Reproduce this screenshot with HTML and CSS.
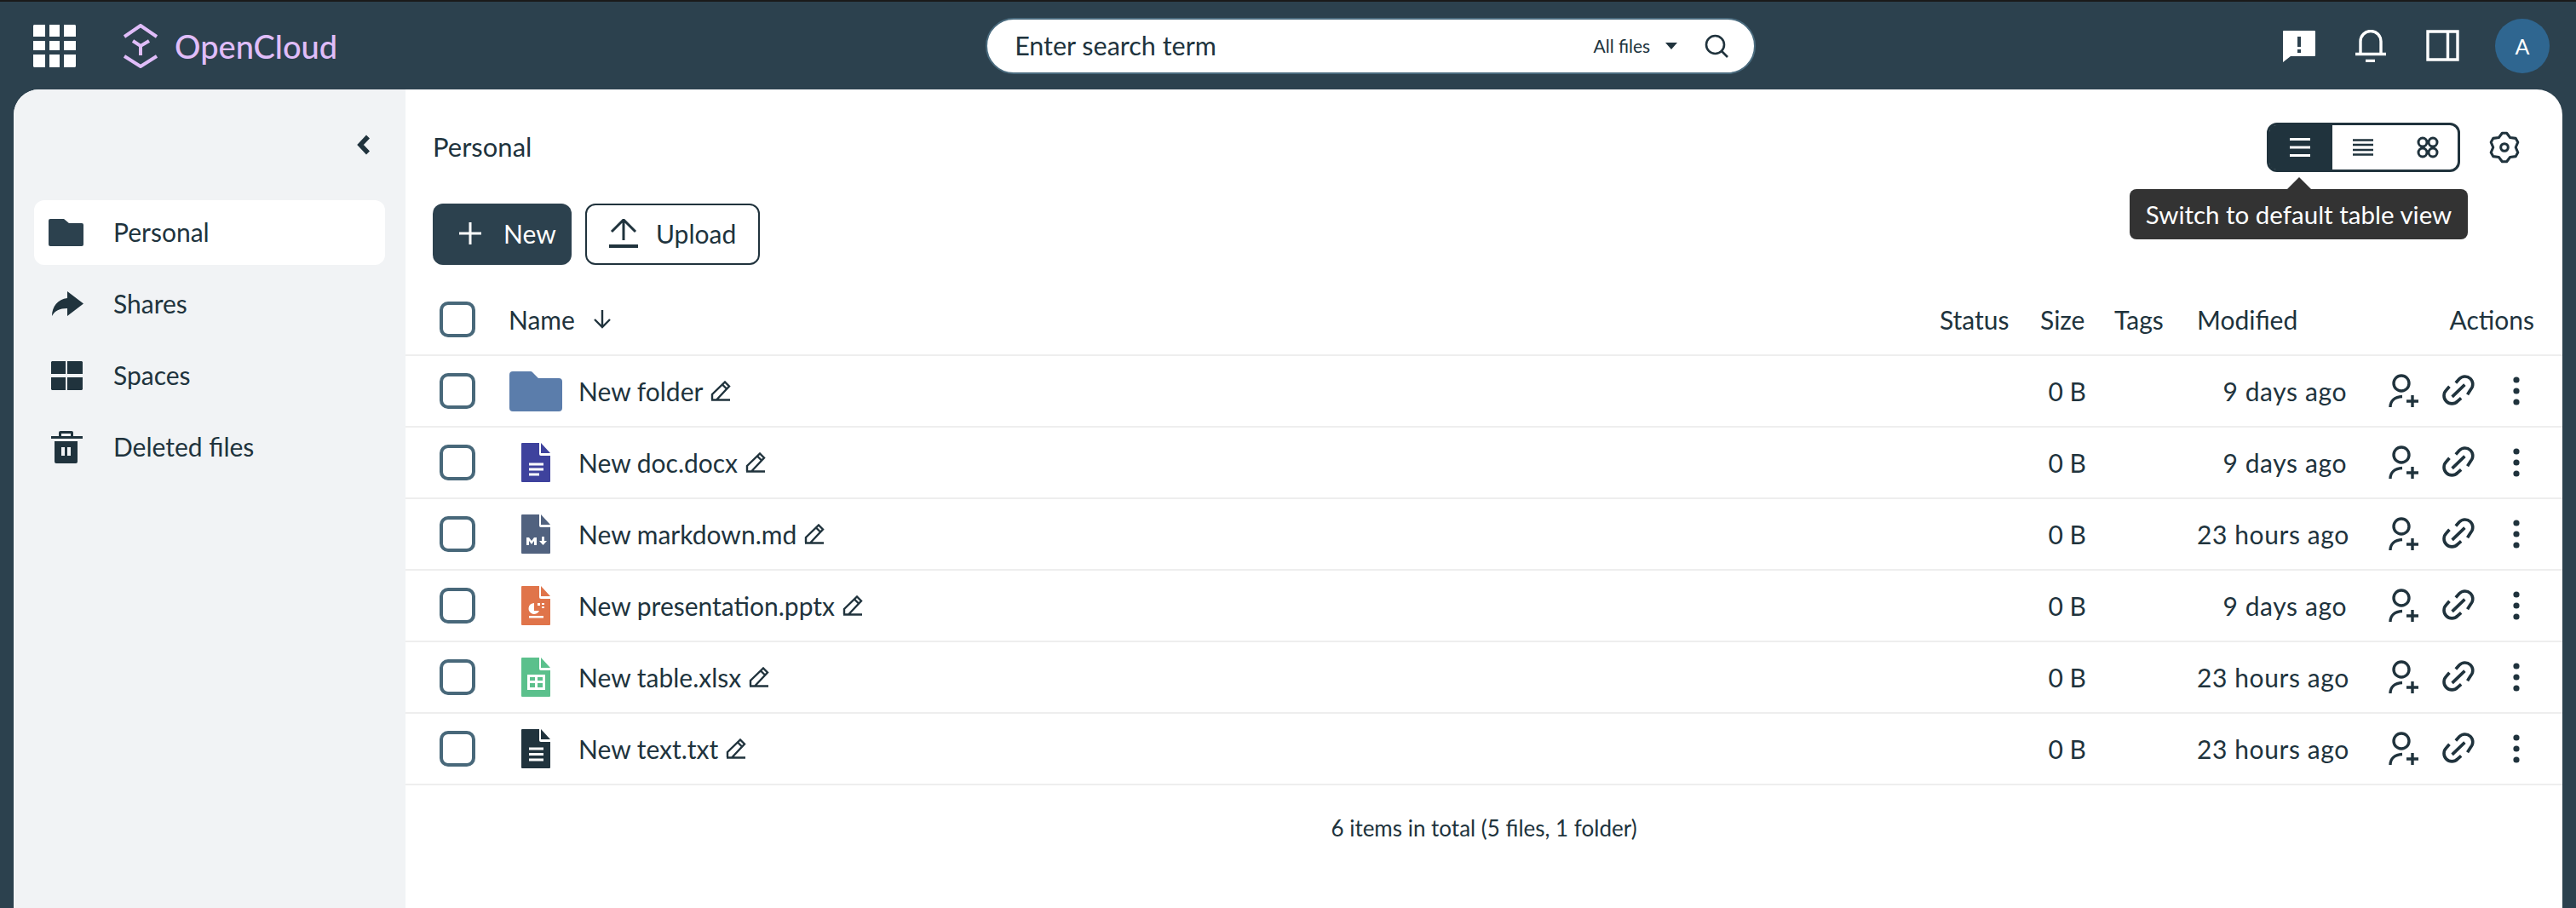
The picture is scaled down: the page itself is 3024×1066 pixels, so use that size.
FILE: index.html
```html
<!DOCTYPE html>
<html lang="en">
<head>
  <meta charset="UTF-8">
  <meta name="viewport" content="width=device-width, initial-scale=1.0">
  <title>OpenCloud - Personal</title>
  <link rel="stylesheet" href="styles.css">
</head>
<body>

  <!-- shared icons -->
  <svg class="icon-defs" width="0" height="0">
    <symbol id="i-pencil" viewBox="0 0 24 24">
      <path d="M1 22.500h22M2 22v-6L17 1.500l5 5L7.500 22M14 4.500l5 5" fill="none" stroke="currentColor" stroke-width="2.400"/>
    </symbol>
    <symbol id="i-user" viewBox="0 0 38 40">
      <circle cx="16" cy="11" r="9" fill="none" stroke="currentColor" stroke-width="3.400"/>
      <path d="M3 39C3 32 8 27 17 26.500M22 32h14M29 25v14" fill="none" stroke="currentColor" stroke-width="3.400"/>
    </symbol>
    <symbol id="i-link" viewBox="0 0 36 36">
      <path d="M15 9l4-4.500a8.600 8.600 0 0 1 12.500 12L28 22M8 13l-3.500 4A8.600 8.600 0 0 0 17 29.500L21 26M11 24.500L25 11" fill="none" stroke="currentColor" stroke-width="3.400"/>
    </symbol>
    <symbol id="i-dots" viewBox="0 0 8 34">
      <circle cx="4" cy="4" r="3.600" fill="currentColor"/>
      <circle cx="4" cy="17" r="3.600" fill="currentColor"/>
      <circle cx="4" cy="30" r="3.600" fill="currentColor"/>
    </symbol>
    <symbol id="i-file" viewBox="0 0 34 46">
      <path d="M1 0h20v13a2 2 0 0 0 2 2h11v30a1 1 0 0 1-1 1H1a1 1 0 0 1-1-1V1a1 1 0 0 1 1-1z" fill="currentColor"/>
      <path d="M23 0l11 12H23z" fill="currentColor"/>
    </symbol>
  </svg>

  <header class="topbar">
    <svg class="apps" width="50" height="50" viewBox="0 0 50 50">
      <path fill="#fff" d="M1 0h13v14H0V1zM19 0h12v14H19zM36 0h13l1 1v13H36zM0 19h14v11H0zM19 19h12v11H19zM36 19h14v11H36zM0 35h14v15H1l-1-1zM19 35h12v15H19zM36 35h14v14l-1 1H36z"/>
    </svg>
    <div class="logo">
      <svg width="40" height="52" viewBox="0 0 40 52">
        <path d="M1 15L20 2l19 13M1 38l19 12 19-12M11 20l9 6 10-6M20 26v11" fill="none" stroke="currentColor" stroke-width="4"/>
      </svg>
      <span class="logo-text">OpenCloud</span>
    </div>

    <div class="search">
      <span class="search-text">Enter search term</span>
      <span class="search-scope">All files</span>
      <span class="caret"></span>
      <svg width="28" height="28" viewBox="0 0 28 28">
        <circle cx="12.500" cy="12.500" r="10.500" fill="none" stroke="currentColor" stroke-width="2.600"/>
        <path d="M20 20l7 7" stroke="currentColor" stroke-width="2.600"/>
      </svg>
    </div>

    <div class="top-actions">
      <svg class="top-icon" width="44" height="40" viewBox="0 0 44 40">
        <path fill="#fff" fill-rule="evenodd" d="M4 2h36a1 1 0 0 1 1 1v28a1 1 0 0 1-1 1H12l-9 7V3a1 1 0 0 1 1-1zM20 9v12h4V9zM20 24v4h4v-4z"/>
      </svg>
      <svg class="top-icon" width="44" height="38" viewBox="0 0 44 38">
        <path d="M10 28V13.500a12 12 0 0 1 24 0V28M4 28.500h36M16 36.500h11" fill="none" stroke="#fff" stroke-width="3.400"/>
      </svg>
      <svg class="top-icon" width="44" height="38" viewBox="0 0 44 38">
        <path d="M5 2h35v33H5zM28.500 2v33" fill="none" stroke="#fff" stroke-width="3.400"/>
      </svg>
      <div class="avatar">A</div>
    </div>
  </header>

  <div class="app">
    <aside class="sidebar">
      <div class="collapse">
        <svg width="16" height="24" viewBox="0 0 16 24"><path d="M13 2.500L4 12l9 9.500" fill="none" stroke="currentColor" stroke-width="5.500"/></svg>
      </div>
      <nav class="nav">
        <a class="nav-item active">
          <svg class="nav-icon" width="41" height="32" viewBox="0 0 41 32">
            <path fill="#2c414e" d="M2 0h16l6 5h15a2 2 0 0 1 2 2v23a2 2 0 0 1-2 2H2a2 2 0 0 1-2-2V2a2 2 0 0 1 2-2z"/>
          </svg>
          Personal
        </a>
        <a class="nav-item">
          <svg class="nav-icon" width="41" height="30" viewBox="0 0 41 30">
            <path fill="currentColor" d="M22 0l19 14.500L22 29V20C13 20 7 23 4 29 4 18 11 9 22 8z"/>
          </svg>
          Shares
        </a>
        <a class="nav-item">
          <svg class="nav-icon" width="41" height="34" viewBox="0 0 41 34">
            <path fill="currentColor" d="M4 0h16v15H3V1zM22 0h17l1 1v14H22zM3 19h17v15H4l-1-1zM22 19h18v14l-1 1H22z"/>
          </svg>
          Spaces
        </a>
        <a class="nav-item">
          <svg class="nav-icon" width="41" height="38" viewBox="0 0 41 38">
            <path fill="currentColor" fill-rule="evenodd" d="M12 2a2 2 0 0 1 2-2h13a2 2 0 0 1 2 2v4h11v3H3V6h9zM15 3v3h11V3zM7 12h27v24a2 2 0 0 1-2 2H9a2 2 0 0 1-2-2zM15 19v10h4V19zM22 19v10h4V19z"/>
          </svg>
          Deleted files
        </a>
      </nav>
    </aside>

    <main class="content">
      <div class="title-row">
        <div class="title">Personal</div>
        <div class="view-switch">
          <button class="view-btn selected">
            <svg width="24" height="22" viewBox="0 0 24 22"><path d="M0 1.500h24M0 11h24M0 20.500h24" stroke="currentColor" stroke-width="3"/></svg>
          </button>
          <button class="view-btn">
            <svg width="24" height="20" viewBox="0 0 24 20"><path d="M0 1.500h24M0 7h24M0 13h24M0 18.500h24" stroke="currentColor" stroke-width="2.400"/></svg>
          </button>
          <button class="view-btn last">
            <svg width="26" height="26" viewBox="0 0 26 26" fill="none" stroke="currentColor" stroke-width="3">
              <circle cx="7" cy="7" r="5"/><circle cx="19" cy="7" r="5"/><circle cx="7" cy="19" r="5"/><circle cx="19" cy="19" r="5"/>
            </svg>
          </button>
          <div class="tooltip">Switch to default table view</div>
        </div>
        <svg class="gear" width="40" height="40" viewBox="-1 -1 26 26">
          <path d="M7.700 4.550L10.280 1.140H13.720L16.300 4.550L20.550 5.080L22.270 8.060L20.600 12L22.270 15.940L20.550 18.920L16.300 19.450L13.720 22.860H10.280L7.700 19.450L3.450 18.920L1.730 15.940L3.400 12L1.730 8.060L3.450 5.080z" fill="none" stroke="currentColor" stroke-width="2" stroke-linejoin="round"/>
          <circle cx="12" cy="12" r="2.800" fill="none" stroke="currentColor" stroke-width="2"/>
        </svg>
      </div>

      <div class="toolbar">
        <button class="btn btn-primary">
          <svg width="26" height="26" viewBox="0 0 26 26"><path d="M0 13h26M13 0v26" stroke="currentColor" stroke-width="3"/></svg>
          New
        </button>
        <button class="btn btn-outline">
          <svg width="34" height="34" viewBox="0 0 34 34"><path d="M3 15L17 1l14 14M17 2v23" fill="none" stroke="currentColor" stroke-width="3"/><path d="M0 32h34" stroke="currentColor" stroke-width="4"/></svg>
          Upload
        </button>
      </div>

      <div class="files">
        <div class="row head">
          <input type="checkbox" class="check">
          <div class="name-head">Name
            <svg width="20" height="22" viewBox="0 0 20 22"><path d="M10 0v20M1 11l9 9 9-9" fill="none" stroke="currentColor" stroke-width="2.400"/></svg>
          </div>
          <div>Status</div>
          <div>Size</div>
          <div>Tags</div>
          <div>Modified</div>
          <div class="right">Actions</div>
        </div>

        <div class="row">
          <input type="checkbox" class="check">
          <div class="name">
            <span class="type">
              <svg width="62" height="47" viewBox="0 0 62 47"><path fill="#5b7dab" d="M4 0h21a3 3 0 0 1 2 1l7 7h24a4 4 0 0 1 4 4v31a4 4 0 0 1-4 4H4a4 4 0 0 1-4-4V4a4 4 0 0 1 4-4z"/></svg>
            </span>
            New folder
            <svg class="pencil"><use href="#i-pencil"/></svg>
          </div>
          <div></div>
          <div class="right">0 B</div>
          <div></div>
          <div class="right date">9 days ago</div>
          <div class="actions">
            <svg class="act-user"><use href="#i-user"/></svg>
            <svg class="act-link"><use href="#i-link"/></svg>
            <svg class="act-dots"><use href="#i-dots"/></svg>
          </div>
        </div>

        <div class="row">
          <input type="checkbox" class="check">
          <div class="name">
            <span class="type">
              <svg class="file-icon docx" viewBox="0 0 34 46">
                <use href="#i-file"/>
                <path d="M9 25h17M9 31h17M9 37h12" stroke="#fff" stroke-width="3"/>
              </svg>
            </span>
            New doc.docx
            <svg class="pencil"><use href="#i-pencil"/></svg>
          </div>
          <div></div>
          <div class="right">0 B</div>
          <div></div>
          <div class="right date">9 days ago</div>
          <div class="actions">
            <svg class="act-user"><use href="#i-user"/></svg>
            <svg class="act-link"><use href="#i-link"/></svg>
            <svg class="act-dots"><use href="#i-dots"/></svg>
          </div>
        </div>

        <div class="row">
          <input type="checkbox" class="check">
          <div class="name">
            <span class="type">
              <svg class="file-icon md" viewBox="0 0 34 46">
                <use href="#i-file"/>
                <path fill="#fff" d="M6 27h3l3 4 3-4h3v9h-3v-5l-3 4-3-4v5H6zM24 26h3v5h3l-4.500 5-4.500-5h3z"/>
              </svg>
            </span>
            New markdown.md
            <svg class="pencil"><use href="#i-pencil"/></svg>
          </div>
          <div></div>
          <div class="right">0 B</div>
          <div></div>
          <div class="right date">23 hours ago</div>
          <div class="actions">
            <svg class="act-user"><use href="#i-user"/></svg>
            <svg class="act-link"><use href="#i-link"/></svg>
            <svg class="act-dots"><use href="#i-dots"/></svg>
          </div>
        </div>

        <div class="row">
          <input type="checkbox" class="check">
          <div class="name">
            <span class="type">
              <svg class="file-icon pptx" viewBox="0 0 34 46">
                <use href="#i-file"/>
                <path fill="#fff" d="M15 20a6.500 6.500 0 1 0 6 9h-6zM19 20h3v3h-3zM24 24h3v2h-3zM24 20h3v2h-3zM9 35h17v2.500H9z"/>
              </svg>
            </span>
            New presentation.pptx
            <svg class="pencil"><use href="#i-pencil"/></svg>
          </div>
          <div></div>
          <div class="right">0 B</div>
          <div></div>
          <div class="right date">9 days ago</div>
          <div class="actions">
            <svg class="act-user"><use href="#i-user"/></svg>
            <svg class="act-link"><use href="#i-link"/></svg>
            <svg class="act-dots"><use href="#i-dots"/></svg>
          </div>
        </div>

        <div class="row">
          <input type="checkbox" class="check">
          <div class="name">
            <span class="type">
              <svg class="file-icon xlsx" viewBox="0 0 34 46">
                <use href="#i-file"/>
                <path fill="#fff" fill-rule="evenodd" d="M7 20h21v18H7zM10 23v4h6v-4zM19 23v4h6v-4zM10 30v5h6v-5zM19 30v5h6v-5z"/>
              </svg>
            </span>
            New table.xlsx
            <svg class="pencil"><use href="#i-pencil"/></svg>
          </div>
          <div></div>
          <div class="right">0 B</div>
          <div></div>
          <div class="right date">23 hours ago</div>
          <div class="actions">
            <svg class="act-user"><use href="#i-user"/></svg>
            <svg class="act-link"><use href="#i-link"/></svg>
            <svg class="act-dots"><use href="#i-dots"/></svg>
          </div>
        </div>

        <div class="row">
          <input type="checkbox" class="check">
          <div class="name">
            <span class="type">
              <svg class="file-icon txt" viewBox="0 0 34 46">
                <use href="#i-file"/>
                <path d="M9 23h17M9 29.500h17M9 36h17" stroke="#fff" stroke-width="3"/>
              </svg>
            </span>
            New text.txt
            <svg class="pencil"><use href="#i-pencil"/></svg>
          </div>
          <div></div>
          <div class="right">0 B</div>
          <div></div>
          <div class="right date">23 hours ago</div>
          <div class="actions">
            <svg class="act-user"><use href="#i-user"/></svg>
            <svg class="act-link"><use href="#i-link"/></svg>
            <svg class="act-dots"><use href="#i-dots"/></svg>
          </div>
        </div>
      </div>

      <div class="summary">6 items in total (5 files, 1 folder)</div>
    </main>
  </div>

</body>
</html>
```

FILE: styles.css
```css
* {
  margin: 0;
  padding: 0;
  box-sizing: border-box;
}
html, body {
  height: 100%;
}
body {
  font-family: 'Lato', sans-serif;
  font-size: 30px;
  background-color: #2c414e;
  color: #20333d;
  display: flex;
  flex-direction: column;
  overflow: hidden;
}
.icon-defs {
  position: absolute;
}
button {
  font: inherit;
  color: inherit;
  background: none;
  border: none;
}

/* top bar */
.topbar {
  height: 105px;
  flex-shrink: 0;
  border-top: 2px solid #1a1a1a;
  display: flex;
  align-items: center;
  padding: 0 31px 0 39px;
}
.apps {
  margin-right: 56px;
}
.logo {
  display: flex;
  align-items: center;
  gap: 20px;
  color: #e0bdf9;
}
.logo-text {
  font-size: 38px;
  font-weight: 500;
}
.search {
  width: 904px;
  height: 66px;
  margin-left: 761px;
  background-color: #fff;
  border: 2px solid #4a6b7e;
  border-radius: 33px;
  display: flex;
  align-items: center;
  padding: 0 30px 0 32px;
  color: #20333d;
}
.search-text {
  flex: 1;
  font-size: 30.5px;
  padding-bottom: 2px;
}
.search-scope {
  font-size: 21px;
}
.caret {
  width: 0;
  height: 0;
  margin: 0 32px 0 18px;
  border-left: 7px solid transparent;
  border-right: 7px solid transparent;
  border-top: 8px solid #20333d;
}
.top-actions {
  margin-left: auto;
  display: flex;
  align-items: center;
  gap: 40px;
}
.avatar {
  width: 64px;
  height: 64px;
  border-radius: 50%;
  background-color: #2f6690;
  color: #fff;
  font-size: 25px;
  display: flex;
  align-items: center;
  justify-content: center;
}

/* card below the bar */
.app {
  flex: 1;
  margin: 0 16px;
  display: flex;
  background-color: #fff;
  border-radius: 30px 30px 0 0;
  overflow: hidden;
}
.sidebar {
  width: 460px;
  flex-shrink: 0;
  background-color: #f1f3f5;
  padding: 0 24px;
}
.collapse {
  height: 130px;
  padding: 53px 17px 0 0;
  display: flex;
  justify-content: flex-end;
  align-items: flex-start;
}
.nav {
  display: flex;
  flex-direction: column;
  gap: 8px;
}
.nav-item {
  height: 76px;
  display: flex;
  align-items: center;
  padding: 0 0 2px 17px;
  gap: 35px;
  border-radius: 12px;
}
.nav-item.active {
  background-color: #fff;
}
.nav-icon {
  margin-top: 2px;
}

/* main */
.content {
  flex: 1;
  min-width: 0;
  padding-top: 39px;
}
.title-row {
  height: 58px;
  display: flex;
  align-items: center;
  padding: 0 48px 0 32px;
}
.title {
  flex: 1;
  font-size: 31px;
  padding-bottom: 2px;
}
.view-switch {
  position: relative;
  display: flex;
  height: 58px;
  width: 227px;
  border: 3px solid #20333d;
  border-radius: 12px;
  margin-right: 32px;
}
.view-btn {
  flex: 1;
  display: flex;
  align-items: center;
  justify-content: center;
}
.view-btn.selected {
  background-color: #20333d;
  color: #fff;
  border-radius: 8px 0 0 8px;
  padding-right: 3px;
}
.view-btn.last {
  padding-left: 5px;
}
.tooltip {
  position: absolute;
  left: -164px;
  top: 75px;
  width: 397px;
  height: 59px;
  background-color: #333;
  color: #fff;
  border-radius: 8px;
  display: flex;
  align-items: center;
  justify-content: center;
  font-size: 29.5px;
  white-space: nowrap;
}
.tooltip::before {
  content: '';
  position: absolute;
  left: 185px;
  top: -14px;
  border-left: 14px solid transparent;
  border-right: 14px solid transparent;
  border-bottom: 14px solid #333;
}
.toolbar {
  display: flex;
  gap: 16px;
  padding-left: 32px;
  margin-top: 37px;
}
.btn {
  height: 72px;
  display: flex;
  align-items: center;
  border-radius: 12px;
  padding-bottom: 2px;
}
.btn-primary {
  width: 163px;
  background-color: #2c414e;
  color: #fff;
  padding-left: 31px;
  gap: 26px;
}
.btn-outline {
  width: 205px;
  border: 2px solid #20333d;
  padding-left: 26px;
  gap: 21px;
}

/* file list */
.files {
  margin-top: 23px;
}
.row {
  height: 84px;
  display: grid;
  grid-template-columns: 48px 1fr 85px 54px 64px 176px 187px;
  column-gap: 33px;
  align-items: center;
  padding: 0 33px 0 40px;
  border-bottom: 2px solid #eee;
}
.check {
  appearance: none;
  width: 42px;
  height: 42px;
  border: 4px solid #48687a;
  border-radius: 10px;
  background-color: #fff;
}
.name-head {
  display: flex;
  align-items: center;
  gap: 22px;
}
.name {
  display: flex;
  align-items: center;
  white-space: nowrap;
}
.type {
  width: 64px;
  margin-right: 18px;
  display: flex;
  justify-content: center;
}
.file-icon {
  width: 34px;
  height: 46px;
}
.docx { color: #3e429d; }
.md { color: #51627f; }
.pptx { color: #e0744a; }
.xlsx { color: #5bc08c; }
.txt { color: #20333d; }
.pencil {
  width: 24px;
  height: 24px;
  margin-left: 9px;
}
.right {
  text-align: right;
  white-space: nowrap;
}
.date {
  letter-spacing: 0.6px;
}
.actions {
  display: flex;
  align-items: center;
  justify-content: flex-end;
  padding-right: 17px;
}
.act-user {
  width: 38px;
  height: 40px;
  margin-right: 26px;
}
.act-link {
  width: 38px;
  height: 38px;
  margin-right: 45px;
}
.act-dots {
  width: 8px;
  height: 34px;
}
.summary {
  padding-top: 34px;
  line-height: 32px;
  font-size: 26px;
  text-align: center;
}
```
